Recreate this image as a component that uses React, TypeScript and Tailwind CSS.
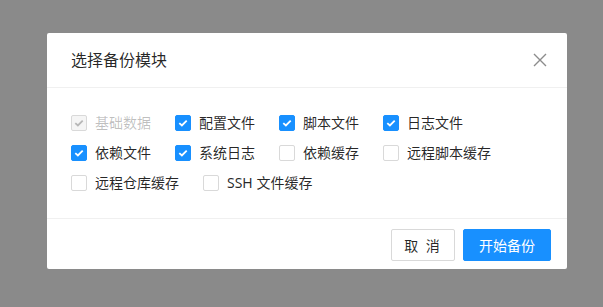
import { useState } from 'react'

type Item = { key: string; label: string; disabled?: boolean }

const items: Item[] = [
  { key: 'base', label: '基础数据', disabled: true },
  { key: 'config', label: '配置文件' },
  { key: 'script', label: '脚本文件' },
  { key: 'log', label: '日志文件' },
  { key: 'deps', label: '依赖文件' },
  { key: 'syslog', label: '系统日志' },
  { key: 'depcache', label: '依赖缓存' },
  { key: 'remoteScript', label: '远程脚本缓存' },
  { key: 'remoteRepo', label: '远程仓库缓存' },
  { key: 'ssh', label: 'SSH 文件缓存' },
]

function Check({ on, disabled }: { on: boolean; disabled?: boolean }) {
  // antd-style checkbox square
  const box = disabled
    ? 'bg-[#f5f5f5] border-[#d9d9d9]'
    : on
      ? 'bg-[#1890ff] border-[#1890ff]'
      : 'bg-white border-[#d9d9d9]'
  return (
    <span className={`flex h-4 w-4 shrink-0 items-center justify-center rounded-[2px] border ${box}`}>
      {on && (
        <svg width="10" height="8" viewBox="0 0 10 8" fill="none">
          <path
            d="M1.3 4.1 L3.9 6.5 L8.7 1.6"
            stroke={disabled ? 'rgba(0,0,0,0.25)' : '#fff'}
            strokeWidth="1.8"
          />
        </svg>
      )}
    </span>
  )
}

export default function App() {
  const [checked, setChecked] = useState<Record<string, boolean>>({
    base: true,
    config: true,
    script: true,
    log: true,
    deps: true,
    syslog: true,
  })

  return (
    <div
      className="flex h-[307px] w-[603px] items-start overflow-hidden bg-[#8a8a8a] pl-[47px] pt-[33px]"
      style={{ fontFamily: '"Noto Sans", "Noto Sans CJK SC", sans-serif' }}
    >
      <div className="flex w-[520px] flex-col rounded-[2px] bg-white">
        {/* Header */}
        <div className="flex h-[55px] items-center justify-between border-b border-[#f0f0f0] pl-6 pr-[20px]">
          <span className="text-[16px] font-normal leading-[22px] text-[rgba(0,0,0,0.85)]">选择备份模块</span>
          <svg width="14" height="14" viewBox="0 0 14 14">
            <path d="M1 1 L13 13 M13 1 L1 13" stroke="#8c8c8c" strokeWidth="1.4" />
          </svg>
        </div>

        {/* Body */}
        <div className="flex h-[130px] flex-wrap content-start gap-x-4 gap-y-2 px-6 pt-6">
          {items.map((it) => {
            const on = !!checked[it.key]
            return (
              <label
                key={it.key}
                className={`flex h-[22px] items-center text-[14px] leading-[22px] ${it.disabled ? 'text-[rgba(0,0,0,0.25)]' : 'cursor-pointer text-[rgba(0,0,0,0.85)]'}`}
                onClick={() => !it.disabled && setChecked((p) => ({ ...p, [it.key]: !p[it.key] }))}
              >
                <Check on={on} disabled={it.disabled} />
                <span className="px-2">{it.label}</span>
              </label>
            )
          })}
        </div>

        {/* Footer */}
        <div className="flex justify-end gap-2 border-t border-[#f0f0f0] px-4 pb-2 pt-[10px]">
          <button className="h-8 w-16 rounded-[2px] border border-[#d9d9d9] bg-white text-[14px] tracking-[2px] text-[rgba(0,0,0,0.85)]">
            取 消
          </button>
          <button className="h-8 w-[88px] rounded-[2px] border border-[#1890ff] bg-[#1890ff] text-[14px] text-white">
            开始备份
          </button>
        </div>
      </div>
    </div>
  )
}
